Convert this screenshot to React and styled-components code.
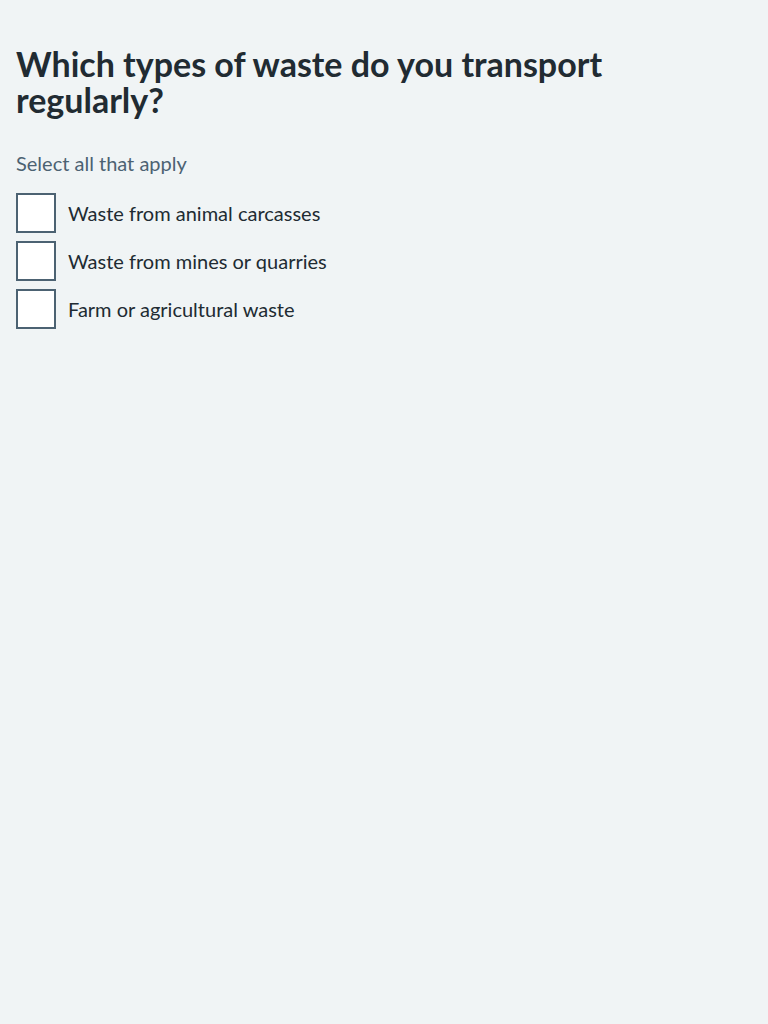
import React, { useState } from "react";
import styled, { createGlobalStyle } from "styled-components";

const GlobalStyle = createGlobalStyle`
  html, body {
    margin: 0;
    padding: 0;
    background: #f0f4f5;
  }
  body {
    font-family: Lato, "Noto Sans", "Liberation Sans", sans-serif;
    color: #212b32;
    -webkit-font-smoothing: antialiased;
  }
`;

const Page = styled.main`
  min-height: 100vh;
  padding: 46px 16px 40px;
  box-sizing: border-box;
`;

const Fieldset = styled.fieldset`
  margin: 0;
  padding: 0;
  border: 0;
  min-width: 0;
`;

const Legend = styled.legend`
  padding: 0;
  margin: 0 0 31px;
  font-size: 34px;
  line-height: 36px;
  font-weight: 700;
  color: #212b32;
  max-width: 640px;
`;

const Hint = styled.div`
  font-size: 20px;
  line-height: 28px;
  color: #4c6272;
  margin-bottom: 16px;
`;

const Options = styled.div`
  display: flex;
  flex-direction: column;
  gap: 8px;
`;

const Item = styled.label`
  display: flex;
  align-items: center;
  gap: 12px;
  cursor: pointer;
  font-size: 20px;
  line-height: 28px;
  color: #212b32;
`;

const Box = styled.span`
  width: 40px;
  height: 40px;
  box-sizing: border-box;
  border: 2px solid #4c6272;
  background: #ffffff;
  flex-shrink: 0;
  display: grid;
  place-items: center;
`;

const HiddenInput = styled.input`
  position: absolute;
  opacity: 0;
  width: 1px;
  height: 1px;
`;

const options = [
  "Waste from animal carcasses",
  "Waste from mines or quarries",
  "Farm or agricultural waste",
];

const App = () => {
  const [checked, setChecked] = useState({});

  const toggle = (label) => {
    setChecked((prev) => ({ ...prev, [label]: !prev[label] }));
  };

  return (
    <>
      <GlobalStyle />
      <Page>
        <Fieldset>
          <Legend>Which types of waste do you transport regularly?</Legend>
          <Hint>Select all that apply</Hint>
          <Options>
            {options.map((label) => (
              <Item key={label}>
                <HiddenInput type="checkbox" checked={!!checked[label]} onChange={() => toggle(label)} />
                <Box>
                  {checked[label] && (
                    <svg width="26" height="20" viewBox="0 0 26 20">
                      <path d="M2 10l8 7L24 3" fill="none" stroke="#212b32" strokeWidth="4" />
                    </svg>
                  )}
                </Box>
                {label}
              </Item>
            ))}
          </Options>
        </Fieldset>
      </Page>
    </>
  );
};

export default App;
